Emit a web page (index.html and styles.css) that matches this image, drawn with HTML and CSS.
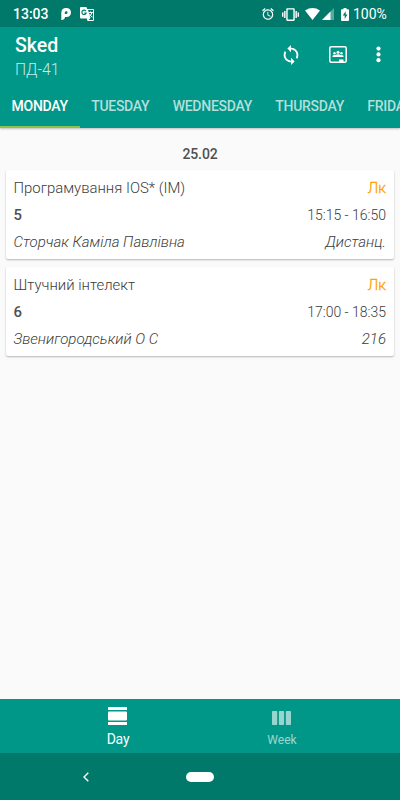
FILE: index.html
```html
<!DOCTYPE html>
<html lang="uk">
<head>
<meta charset="utf-8">
<title>Sked</title>
<link rel="stylesheet" href="styles.css">
</head>
<body>
<div class="status">
  <span class="clock">13:03</span>
  <svg class="s-park" width="10" height="12" viewBox="0 0 10 12"><path fill-rule="evenodd" d="M.3 5Q.3 0 5.200 0 10 .2 10 4.600 9.800 9 5.500 9H4Q3.800 12 .3 12zM5.200 3.200A1.400 1.400 0 0 0 3.800 4.600V6H5.200A1.400 1.400 0 0 0 5.200 3.200z" fill="#fff"/></svg>
  <svg class="s-trans" width="14" height="14" viewBox="0 0 14 14"><path d="M1 0h5.500l.7 2H13q1 0 1 1v10q0 1-1 1H7.500L6.700 11.500H1q-1 0-1-1V1q0-1 1-1z" fill="#fff"/><path d="M6 4.200A2.200 2.200 0 1 0 6.200 6H4.200" fill="none" stroke="#00796b" stroke-width="1.100"/><path d="M8 3h5v10H8.500l2-2z" fill="#00796b"/><path d="M8.500 5.500h4.300M10.500 4.500v1M12 5.500q-1 3-3 4.500M9.500 7q1 2 3 3.200" fill="none" stroke="#fff" stroke-width="1"/></svg>
  <svg class="s-alarm" width="14" height="14" viewBox="0 0 24 24"><path fill="#fff" d="M22 5.720l-4.600-3.860-1.290 1.530 4.600 3.860L22 5.720zM7.880 3.390L6.600 1.860 2 5.710l1.290 1.530 4.590-3.850zM12.500 8H11v6l4.750 2.850.75-1.230-4-2.370V8zM12 4c-4.970 0-9 4.030-9 9s4.020 9 9 9a9 9 0 1 0 0-18zm0 16c-3.870 0-7-3.130-7-7s3.130-7 7-7 7 3.130 7 7-3.130 7-7 7z"/></svg>
  <svg class="s-vib" width="17" height="17" viewBox="0 0 24 24"><path fill="#fff" d="M0 15h2V9H0v6zm3 2h2V7H3v10zm19-8v6h2V9h-2zm-3 8h2V7h-2v10zM16.500 3h-9C6.670 3 6 3.670 6 4.500v15c0 .83.67 1.500 1.500 1.500h9c.83 0 1.500-.67 1.500-1.500v-15c0-.83-.67-1.500-1.500-1.500zM16 19H8V5h8v14z"/></svg>
  <svg class="s-wifi" width="15" height="12" viewBox="0 0 16 12" preserveAspectRatio="none"><path fill="#fff" d="M0 2.400Q8-2.400 16 2.400L8 12z"/></svg>
  <svg class="s-cell" width="12" height="12" viewBox="0 0 12 12"><path fill="#fff" fill-opacity=".35" d="M12 0v12H0z"/><path fill="#fff" d="M8.500 3.500V12H0z"/></svg>
  <svg class="s-batt" width="8" height="13" viewBox="0 0 8 13"><path fill="#fff" fill-rule="evenodd" d="M2.500 0h3v1.300H7q1 0 1 1V12q0 1-1 1H1q-1 0-1-1V2.300q0-1 1-1h1.500zM4.700 3.200L1.700 7.600h2v3.300l2.700-4.500H4.700z"/></svg>
  <span class="pct">100%</span>
</div>
<header class="top">
  <div class="bar">
    <div class="titles"><div class="title">Sked</div><div class="group">ПД-41</div></div>
    <svg class="sync" width="22" height="22" viewBox="0 0 24 24"><path fill="#fff" d="M12 4V1L8 5l4 4V6c3.310 0 6 2.690 6 6 0 1.010-.25 1.970-.7 2.800l1.460 1.460A7.930 7.930 0 0 0 20 12c0-4.420-3.580-8-8-8zm0 14c-3.310 0-6-2.690-6-6 0-1.010.25-1.970.7-2.800L5.240 7.740A7.930 7.930 0 0 0 4 12c0 4.420 3.580 8 8 8v3l4-4-4-4v3z"/></svg>
    <svg class="board" width="18" height="17" viewBox="0 0 18 17"><rect x=".8" y=".8" width="16.400" height="15.400" rx="1.500" fill="none" stroke="#fff" stroke-width="1.500"/><g fill="#fff"><circle cx="9" cy="6.200" r="1.500"/><circle cx="5.500" cy="7.200" r="1.200"/><circle cx="12.500" cy="7.200" r="1.200"/><path d="M3.500 11V9.800Q4.500 8.600 6.300 9 9 7.500 11.700 9 13.500 8.600 14.500 9.800V11zM10 13.500h4.500V16H10z"/></g></svg>
    <svg class="more" width="5" height="17" viewBox="0 0 5 17"><g fill="#fff"><circle cx="2.500" cy="2.600" r="2.100"/><circle cx="2.500" cy="8.400" r="2.100"/><circle cx="2.500" cy="14.200" r="2.100"/></g></svg>
  </div>
  <nav class="tabs"><span class="tab on">MONDAY</span><span class="tab">TUESDAY</span><span class="tab">WEDNESDAY</span><span class="tab">THURSDAY</span><span class="tab">FRIDAY</span></nav>
</header>
<main>
  <div class="date">25.02</div>
  <section class="card">
    <div class="row"><span class="subj">Програмування IOS* (ІМ)</span><span class="kind">Лк</span></div>
    <div class="row mid"><b>5</b><span class="time">15:15 - 16:50</span></div>
    <div class="row it"><span class="who">Сторчак Каміла Павлівна</span><span>Дистанц.</span></div>
  </section>
  <section class="card">
    <div class="row"><span class="subj">Штучний інтелект</span><span class="kind">Лк</span></div>
    <div class="row mid"><b>6</b><span class="time">17:00 - 18:35</span></div>
    <div class="row it"><span class="who">Звенигородський О С</span><span>216</span></div>
  </section>
</main>
<nav class="bottom">
  <div class="item day"><svg width="19" height="18" viewBox="0 0 19 18"><path fill="#fff" d="M0 0h19v3H0zM1 4.500h17q1 0 1 1v7q0 1-1 1H1q-1 0-1-1v-7q0-1 1-1zM0 15h19v3H0z"/></svg><span>Day</span></div>
  <div class="item week"><svg width="19" height="14" viewBox="0 0 19 14"><g fill="#fff"><rect width="5.200" height="14" rx=".8"/><rect x="6.900" width="5.200" height="14" rx=".8"/><rect x="13.800" width="5.200" height="14" rx=".8"/></g></svg><span>Week</span></div>
</nav>
<footer class="sys">
  <svg class="back" width="6" height="10" viewBox="0 0 6 10"><path d="M5.300.8L1 5l4.300 4.200" fill="none" stroke="#fff" stroke-width="1.400"/></svg>
  <span class="pill"></span>
</footer>
</body>
</html>
```
FILE: styles.css
```css
* { box-sizing: border-box; }
body {
  margin: 0;
  width: 400px;
  height: 800px;
  overflow: hidden;
  display: flex;
  flex-direction: column;
  background: #fafafa;
  font-family: Roboto, sans-serif;
  color: #3c3c3c;
}
svg { display: block; flex: none; }
.status {
  height: 27px;
  flex: none;
  display: flex;
  align-items: center;
  padding: 1px 0 0 13px;
  background: #00796b;
  color: #fff;
  font-size: 14px;
  font-weight: 500;
}
.clock { width: 48px; }
.s-trans { margin-left: 9px; }
.s-alarm { margin-left: 167px; }
.s-vib { margin-left: 7px; }
.s-wifi { margin-left: 6px; }
.s-cell { margin-left: 2px; }
.s-batt { margin-left: 7px; }
.pct { margin-left: 4px; font-weight: 400; }
.top {
  height: 101px;
  flex: none;
  background: #009688;
  color: #fff;
  box-shadow: 0 1px 2px rgba(0, 0, 0, .25);
}
.bar {
  height: 56px;
  display: flex;
  align-items: center;
  padding-left: 15px;
}
.titles { width: 265px; height: 50px; }
.title { font-size: 19.500px; line-height: 24px; font-weight: 500; margin-top: 4px; }
.group { font-size: 15.700px; line-height: 23px; font-weight: 300; color: #c8e9e5; }
.sync, .board, .more { margin-top: -1px; }
.board { margin-left: 27px; }
.more { margin-left: 29px; }
.tabs {
  height: 45px;
  display: flex;
  overflow: hidden;
  white-space: nowrap;
}
.tab {
  flex: none;
  padding: 0 11.700px 0 11.600px;
  line-height: 46px;
  font-size: 14px;
  letter-spacing: -.27px;
  font-weight: 500;
  color: #b3dfdb;
}
.on { color: #fff; border-bottom: 2px solid #8bc34a; }
main { flex: 1; padding: 0 6px; }
.date {
  height: 42px;
  padding-top: 17px;
  line-height: 18px;
  text-align: center;
  font-size: 14px;
  letter-spacing: -.1px;
  font-weight: 500;
  color: #505050;
}
.card {
  height: 89px;
  margin-bottom: 8px;
  padding: 4.500px 8px 5px 7.500px;
  background: #fff;
  border-radius: 2px;
  box-shadow: 0 1px 2px rgba(0, 0, 0, .28);
}
.row {
  height: 27px;
  display: flex;
  align-items: center;
  justify-content: space-between;
  font-size: 14.900px;
  line-height: 18px;
  font-weight: 300;
}
.it { font-style: italic; height: 26px; font-size: 15px; }
.time { font-size: 14px; }
.kind { color: #ffa000; font-size: 15px; font-weight: 300; -webkit-text-stroke: .3px #ffa000; }
.row b { font-weight: 500; color: #505050; }
.bottom {
  height: 54px;
  flex: none;
  display: flex;
  padding: 0 36px;
  background: #009688;
  color: #fff;
}
.item {
  width: 164px;
  display: flex;
  flex-direction: column;
  align-items: center;
}
.day { padding-top: 8px; font-size: 14px; letter-spacing: -.2px; line-height: 18px; }
.day span { margin-top: 5px; }
.week { padding-top: 12px; font-size: 12px; line-height: 16px; opacity: .6; }
.week span { margin-top: 7px; }
.day svg, .week svg { margin-left: -2px; }
.sys {
  height: 47px;
  flex: none;
  display: flex;
  align-items: center;
  padding-left: 83px;
  background: #00796b;
}
.pill { width: 28px; height: 10px; margin-left: 97px; border-radius: 5px; background: #fff; }
```
